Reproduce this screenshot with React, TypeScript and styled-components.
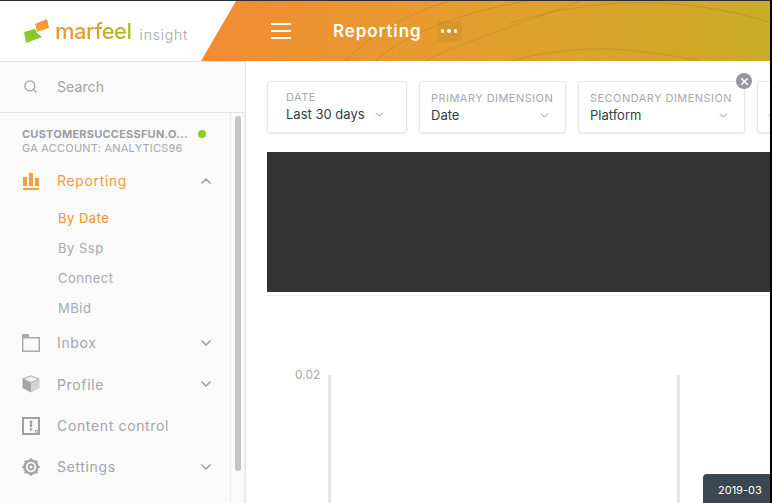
import React from 'react';
import styled, { createGlobalStyle } from 'styled-components';
import { ChevronDown, ChevronUp, Search, X } from 'lucide-react';

const GlobalStyle = createGlobalStyle`
  html, body {
    margin: 0;
    padding: 0;
    height: 100%;
    overflow: hidden;
    background: #ffffff;
  }
  * {
    box-sizing: border-box;
  }
  body {
    font-family: Inter, "Open Sans", sans-serif;
  }
`;

const filters = [
  { label: 'DATE', value: 'Last 30 days', width: 140, roomy: true },
  { label: 'PRIMARY DIMENSION', value: 'Date', width: 147 },
  { label: 'SECONDARY DIMENSION', value: 'Platform', width: 167, removable: true },
  { label: 'TYPE', value: 'Clicks', width: 120 },
];

const subItems = [
  { label: 'By Date', active: true },
  { label: 'By Ssp' },
  { label: 'Connect' },
  { label: 'MBid' },
];

const BarsIcon = () => (
  <svg width="18" height="18" viewBox="0 0 18 18" fill="#f4a03d">
    <rect x="1" y="5" width="4" height="9" />
    <rect x="7" y="1" width="4" height="13" />
    <rect x="13" y="6" width="4" height="8" />
    <rect x="1" y="16" width="16" height="2" />
  </svg>
);

const FolderIcon = () => (
  <svg width="18" height="18" viewBox="0 0 18 18" fill="none">
    <path d="M0 0h7v3h11v15H0z" fill="#a9acaf" />
    <rect x="1.5" y="4.5" width="15" height="12" fill="#fafafa" />
  </svg>
);

const CubeIcon = () => (
  <svg width="18" height="18" viewBox="0 0 18 18">
    <path d="M9 .5l8.5 3v9.5L9 17.5z" fill="#d0d2d4" />
    <path d="M9 .5L.5 3.5V13L9 17.5z" fill="#a4a7aa" />
    <path d="M9 1l8 3-8 3.5L1 4z" fill="#f4f4f4" stroke="#a9acaf" strokeWidth="0.9" />
  </svg>
);

const ControlIcon = () => (
  <svg width="18" height="18" viewBox="0 0 18 18" fill="none">
    <rect x="1" y="1" width="16" height="16" stroke="#9ea1a5" strokeWidth="2" />
    <rect x="7.8" y="3.5" width="2.4" height="6.5" fill="#9ea1a5" />
    <rect x="7.8" y="11.2" width="2.4" height="2.4" fill="#9ea1a5" />
    <rect x="13" y="13" width="4" height="4" fill="#9ea1a5" />
    <rect x="14" y="14" width="1.6" height="1.6" fill="#fafafa" />
  </svg>
);

const GearIcon = () => (
  <svg width="18" height="18" viewBox="0 0 18 18" fill="none">
    <circle cx="9" cy="9" r="6.5" stroke="#a2a5a9" strokeWidth="2.6" />
    <circle cx="9" cy="9" r="2.5" stroke="#a2a5a9" strokeWidth="1.8" />
    <path
      d="M9 .2v2.4M9 15.4v2.4M.2 9h2.4M15.4 9h2.4M2.8 2.8l1.7 1.7M13.5 13.5l1.7 1.7M15.2 2.8l-1.7 1.7M4.5 13.5l-1.7 1.7"
      stroke="#a2a5a9"
      strokeWidth="2.2"
    />
  </svg>
);

const LogoMark = () => (
  <svg width="28" height="24" viewBox="0 0 28 24">
    <defs>
      <linearGradient id="markOrange" x1="0" y1="1" x2="1" y2="0">
        <stop offset="0" stopColor="#f7a733" />
        <stop offset="1" stopColor="#f0902f" />
      </linearGradient>
      <linearGradient id="markGreen" x1="0" y1="1" x2="1" y2="0">
        <stop offset="0" stopColor="#8fd12a" />
        <stop offset="1" stopColor="#79c234" />
      </linearGradient>
    </defs>
    <path d="M0 13l11-3 2 4 5 4-16 6z" fill="url(#markGreen)" />
    <path d="M11 5l12-5 2 9-12 4z" fill="url(#markOrange)" />
  </svg>
);

const App: React.FC = () => {
  return (
    <>
      <GlobalStyle />
      <Page>
        <Header>
          <HeaderCurves viewBox="0 0 770 60" preserveAspectRatio="none" fill="none">
            <path d="M345 60C375 30 420 5 470 -5" />
            <path d="M375 60C410 30 470 8 540 -2" />
            <path d="M425 60C470 38 525 22 585 -2" />
            <path d="M510 22C600 -6 690 -4 772 22" />
            <path d="M510 60C580 42 630 46 700 60" />
          </HeaderCurves>
          <LogoArea>
            <LogoMark />
            <LogoWord>marfeel</LogoWord>
            <LogoSub>insight</LogoSub>
          </LogoArea>
          <MenuButton>
            <span />
            <span />
            <span />
          </MenuButton>
          <HeaderTitle>Reporting</HeaderTitle>
          <DotsButton>
            <i />
            <i />
            <i />
          </DotsButton>
        </Header>
        <Body>
          <Sidebar>
            <SearchRow>
              <Search size={15} color="#9b9fa4" strokeWidth={2} />
              <SearchText>Search</SearchText>
            </SearchRow>
            <NavArea>
              <NavList>
                <Account>
                  <AccountName>
                    <AccountTitle>CUSTOMERSUCCESSFUN.O...</AccountTitle>
                    <StatusDot />
                  </AccountName>
                  <AccountSub>GA ACCOUNT: ANALYTICS96</AccountSub>
                </Account>
                <NavRow $active>
                  <BarsIcon />
                  <NavLabel>Reporting</NavLabel>
                  <ChevronUp size={16} color="#9b9fa4" strokeWidth={2.4} />
                </NavRow>
                <SubList>
                  {subItems.map(item => (
                    <SubItem key={item.label} $active={item.active}>
                      {item.label}
                    </SubItem>
                  ))}
                </SubList>
                <NavRow>
                  <FolderIcon />
                  <NavLabel>Inbox</NavLabel>
                  <ChevronDown size={16} color="#9b9fa4" strokeWidth={2.4} />
                </NavRow>
                <NavRow>
                  <CubeIcon />
                  <NavLabel>Profile</NavLabel>
                  <ChevronDown size={16} color="#9b9fa4" strokeWidth={2.4} />
                </NavRow>
                <NavRow>
                  <ControlIcon />
                  <NavLabel>Content control</NavLabel>
                </NavRow>
                <NavRow>
                  <GearIcon />
                  <NavLabel>Settings</NavLabel>
                  <ChevronDown size={16} color="#9b9fa4" strokeWidth={2.4} />
                </NavRow>
              </NavList>
              <ScrollTrack>
                <ScrollThumb />
              </ScrollTrack>
            </NavArea>
          </Sidebar>
          <Main>
            <FilterRow>
              {filters.map(filter => (
                <FilterCard key={filter.label} $width={filter.width} $roomy={filter.roomy}>
                  <FilterLabel>{filter.label}</FilterLabel>
                  <FilterValue>
                    {filter.value}
                    <ChevronDown size={13} color="#8f9499" strokeWidth={1.8} />
                  </FilterValue>
                  {filter.removable && (
                    <RemoveBadge>
                      <X size={11} color="#ffffff" strokeWidth={3.5} />
                    </RemoveBadge>
                  )}
                </FilterCard>
              ))}
            </FilterRow>
            <DarkPanel />
            <Divider />
            <Chart>
              <YLabel>0.02</YLabel>
              <AxisLine />
              <PlotGap />
              <AxisLine />
              <Tooltip>2019-03</Tooltip>
            </Chart>
          </Main>
        </Body>
      </Page>
    </>
  );
};

export default App;

const Page = styled.div`
  width: 772px;
  height: 503px;
  display: flex;
  flex-direction: column;
  overflow: hidden;
  border-top: 1px solid #2e2e2e;
  border-right: 2px solid #000000;
`;

const Header = styled.header`
  position: relative;
  height: 60px;
  flex: none;
  display: flex;
  align-items: center;
  background: linear-gradient(90deg, #f28c34 28%, #e2a02c 65%, #c9ac26 100%);
`;

const HeaderCurves = styled.svg`
  position: absolute;
  inset: 0;
  width: 100%;
  height: 100%;

  path {
    stroke: rgba(120, 90, 20, 0.2);
    stroke-width: 1;
  }
`;

const LogoArea = styled.div`
  position: relative;
  width: 236px;
  height: 100%;
  flex: none;
  display: flex;
  align-items: center;
  padding-left: 24px;
  background: #ffffff;
  clip-path: polygon(0 0, 100% 0, 201px 100%, 0 100%);
`;

const LogoWord = styled.span`
  margin-left: 3px;
  font-size: 22px;
  font-weight: 500;
  line-height: 1;
  letter-spacing: -0.5px;
  background: linear-gradient(90deg, #f19233 0%, #dfa12c 45%, #9ec51f 100%);
  -webkit-background-clip: text;
  background-clip: text;
  color: transparent;
`;

const LogoSub = styled.span`
  margin-left: 8px;
  margin-top: 6px;
  font-size: 14px;
  font-weight: 300;
  letter-spacing: 0.8px;
  color: #a0a4aa;
`;

const MenuButton = styled.div`
  position: relative;
  margin-left: 35px;
  width: 20px;
  display: flex;
  flex-direction: column;
  gap: 5px;

  span {
    display: block;
    height: 2px;
    background: #ffffff;
  }
`;

const HeaderTitle = styled.h1`
  position: relative;
  margin: 0 0 0 42px;
  font-size: 17px;
  font-weight: 600;
  letter-spacing: 0.9px;
  color: #ffffff;
`;

const DotsButton = styled.div`
  position: relative;
  margin-left: 15px;
  width: 25px;
  height: 21px;
  display: flex;
  align-items: center;
  justify-content: center;
  gap: 3px;
  background: rgba(150, 110, 40, 0.14);

  i {
    width: 3.5px;
    height: 3.5px;
    border-radius: 50%;
    background: #ffffff;
  }
`;

const Body = styled.div`
  flex: 1;
  min-height: 0;
  display: flex;
`;

const Sidebar = styled.aside`
  width: 246px;
  flex: none;
  display: flex;
  flex-direction: column;
  background: #fafafa;
  border-right: 1px solid #e6e6e6;
`;

const SearchRow = styled.div`
  height: 52px;
  flex: none;
  display: flex;
  align-items: center;
  gap: 19px;
  padding: 0 0 2px 23px;
  border-top: 1px solid #e4e4e4;
  border-bottom: 1px solid #e4e4e4;
`;

const SearchText = styled.span`
  font-size: 14px;
  letter-spacing: 0.1px;
  color: #9fa3a8;
`;

const NavArea = styled.div`
  flex: 1;
  min-height: 0;
  display: flex;
`;

const NavList = styled.nav`
  flex: 1;
  min-width: 0;
  padding: 14px 16px 0 22px;
`;

const Account = styled.div`
  height: 33px;
`;

const AccountName = styled.div`
  display: flex;
  align-items: center;
  justify-content: space-between;
  padding-right: 8px;
  height: 14px;
`;

const AccountTitle = styled.span`
  font-size: 11px;
  font-weight: 700;
  letter-spacing: 0.22px;
  color: #9a9ea3;
`;

const StatusDot = styled.span`
  width: 8px;
  height: 8px;
  border-radius: 50%;
  background: #8bd01e;
`;

const AccountSub = styled.div`
  font-size: 11px;
  line-height: 14px;
  letter-spacing: 0.22px;
  color: #a6a9ad;
`;

const NavRow = styled.div<{ $active?: boolean }>`
  height: 41.3px;
  display: flex;
  align-items: center;
  color: ${props => (props.$active ? '#f49a3c' : '#a2a5a9')};
`;

const NavLabel = styled.span`
  flex: 1;
  margin-left: 17px;
  font-size: 14px;
  letter-spacing: 0.65px;
`;

const SubList = styled.div`
  padding: 2px 0 0 36px;
  margin-bottom: -1px;
`;

const SubItem = styled.div<{ $active?: boolean }>`
  height: 30px;
  line-height: 30px;
  font-size: 13px;
  letter-spacing: 0.5px;
  color: ${props => (props.$active ? '#f28f30' : '#a6a9ad')};
`;

const ScrollTrack = styled.div`
  width: 15px;
  flex: none;
  padding: 3px 3px 0 4px;
  border-left: 1px solid #ececec;
  border-right: 1px solid #f0f0f0;
`;

const ScrollThumb = styled.div`
  height: 355px;
  border-radius: 4px;
  background: #c4c4c4;
`;

const Main = styled.main`
  flex: 1;
  min-width: 0;
  display: flex;
  flex-direction: column;
  padding: 20px 0 0 21px;
  overflow: hidden;
`;

const FilterRow = styled.div`
  display: flex;
  gap: 12px;
  height: 52px;
  flex: none;
`;

const FilterCard = styled.div<{ $width: number; $roomy?: boolean }>`
  position: relative;
  width: ${props => props.$width}px;
  flex: none;
  padding: ${props => (props.$roomy ? '9px 18px 0' : '10px 12px 0 11px')};
  background: #ffffff;
  border: 1px solid #e8e8e8;
  border-radius: 3px;
  box-shadow: 0 1px 2px rgba(0, 0, 0, 0.1);
`;

const FilterLabel = styled.div`
  font-size: 11px;
  line-height: 13px;
  letter-spacing: 0.46px;
  white-space: nowrap;
  color: #a6a9ad;
`;

const FilterValue = styled.div`
  display: flex;
  align-items: center;
  justify-content: space-between;
  padding-right: 2px;
  margin-top: 2px;
  font-size: 13px;
  line-height: 17px;
  color: #33404a;
`;

const RemoveBadge = styled.div`
  position: absolute;
  top: -9px;
  right: -8px;
  width: 16px;
  height: 16px;
  display: flex;
  align-items: center;
  justify-content: center;
  border-radius: 50%;
  background: #94989d;
`;

const DarkPanel = styled.div`
  height: 140px;
  flex: none;
  margin-top: 19px;
  background: #333333;
`;

const Divider = styled.div`
  height: 1px;
  flex: none;
  margin-top: 3px;
  background: #ececec;
`;

const Chart = styled.div`
  position: relative;
  flex: 1;
  display: flex;
  padding: 79px 0 0 28px;
`;

const YLabel = styled.div`
  width: 33px;
  margin-top: -8px;
  font-size: 12px;
  color: #a8a8a8;
`;

const AxisLine = styled.div`
  width: 2.5px;
  background: #e6e6e6;
`;

const PlotGap = styled.div`
  width: 346.5px;
`;

const Tooltip = styled.div`
  position: absolute;
  right: 0;
  bottom: 0;
  width: 67px;
  height: 29px;
  padding-left: 15px;
  font-size: 11px;
  line-height: 33px;
  border-radius: 4px 0 0 0;
  color: #ffffff;
  background: #3b4852;
`;
